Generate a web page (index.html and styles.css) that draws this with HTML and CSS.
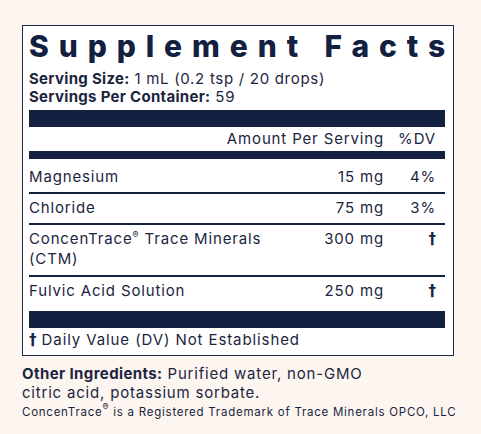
FILE: index.html
```html
<!DOCTYPE html>
<html lang="en">
<head>
    <meta charset="UTF-8">
    <meta name="viewport" content="width=device-width, initial-scale=1.0">
    <title>Supplement Facts</title>
    <link rel="stylesheet" href="styles.css">
</head>
<body>
    <div class="label">
        <h1 class="title">Supplement Facts</h1>
        <div class="serving"><b>Serving Size:</b> 1 mL (0.2 tsp / 20 drops)</div>
        <div class="serving"><b>Servings Per Container:</b> 59</div>
        <div class="bar thick"></div>
        <div class="row head">
            <span class="name"></span>
            <span class="amount">Amount Per Serving</span>
            <span class="dv">%DV</span>
        </div>
        <div class="bar thin"></div>
        <div class="row r1 line">
            <span class="name">Magnesium</span>
            <span class="amount">15 mg</span>
            <span class="dv">4%</span>
        </div>
        <div class="row r2 line">
            <span class="name">Chloride</span>
            <span class="amount">75 mg</span>
            <span class="dv">3%</span>
        </div>
        <div class="row r3 line">
            <span class="name">ConcenTrace<sup>®</sup> Trace Minerals<br>(CTM)</span>
            <span class="amount">300 mg</span>
            <span class="dv dagger">†</span>
        </div>
        <div class="row r4">
            <span class="name">Fulvic Acid Solution</span>
            <span class="amount">250 mg</span>
            <span class="dv dagger">†</span>
        </div>
        <div class="bar thick"></div>
        <div class="note"><span class="dagger">†</span> Daily Value (DV) Not Established</div>
    </div>
    <p class="other"><b>Other Ingredients:</b> Purified water, non-GMO<br>citric acid, potassium sorbate.</p>
    <p class="tm">ConcenTrace<sup>®</sup> is a Registered Trademark of Trace Minerals OPCO, LLC</p>
</body>
</html>
```

FILE: styles.css
```css
body {
    margin: 0;
    padding: 25px 0 0 22px;
    background-color: #fcf5f0;
    color: #1c2540;
    font-family: Inter, "Liberation Sans", sans-serif;
    height: 434px;
    box-sizing: border-box;
}
.label {
    width: 432px;
    box-sizing: border-box;
    background-color: white;
    border: 1.5px solid #1f2a48;
    padding: 3px 8px 0 6px;
}
.title {
    margin: 0 0 7px 0;
    font-size: 30px;
    font-weight: 800;
    letter-spacing: 9.9px;
    line-height: 34px;
    color: #13203f;
    white-space: nowrap;
}
.serving {
    font-size: 15px;
    line-height: 18px;
    letter-spacing: 0.7px;
    white-space: nowrap;
}
.serving b {
    font-weight: 700;
    letter-spacing: 0.3px;
}
.bar {
    background-color: #13203f;
}
.thick {
    height: 17px;
}
.serving + .serving + .thick {
    margin-top: 4px;
}
.thin {
    height: 8px;
}
.row {
    display: flex;
    align-items: flex-start;
    font-size: 15px;
    line-height: 20px;
    letter-spacing: 0.85px;
    padding-top: 4px;
    padding-right: 9px;
}
.row .name {
    flex: 1;
}
.row .amount {
    text-align: right;
}
.row .dv {
    width: 52px;
    text-align: right;
}
.head {
    align-items: center;
    padding-top: 0;
    height: 24px;
}
.line {
    border-bottom: 2px solid #13203f;
}
.r1 {
    padding-top: 8px;
    height: 25px;
}
.r2 {
    height: 25px;
}
.r3 {
    height: 46px;
}
.r4 {
    height: 30px;
}
.dagger {
    font-family: "DejaVu Sans", sans-serif;
    font-weight: 700;
    letter-spacing: 0;
}
sup {
    font-size: 9px;
    line-height: 0;
    vertical-align: 6px;
}
.note {
    font-size: 15px;
    line-height: 20px;
    letter-spacing: 0.9px;
    padding: 2px 0 5px 0;
}
.other {
    margin: 8px 0 0 0;
    font-size: 15px;
    line-height: 19px;
    letter-spacing: 0.8px;
}
.other b {
    letter-spacing: 0.4px;
}
.tm {
    margin: 2px 0 0 0;
    font-size: 11.5px;
    line-height: 17px;
    letter-spacing: 0.75px;
    white-space: nowrap;
}
```
